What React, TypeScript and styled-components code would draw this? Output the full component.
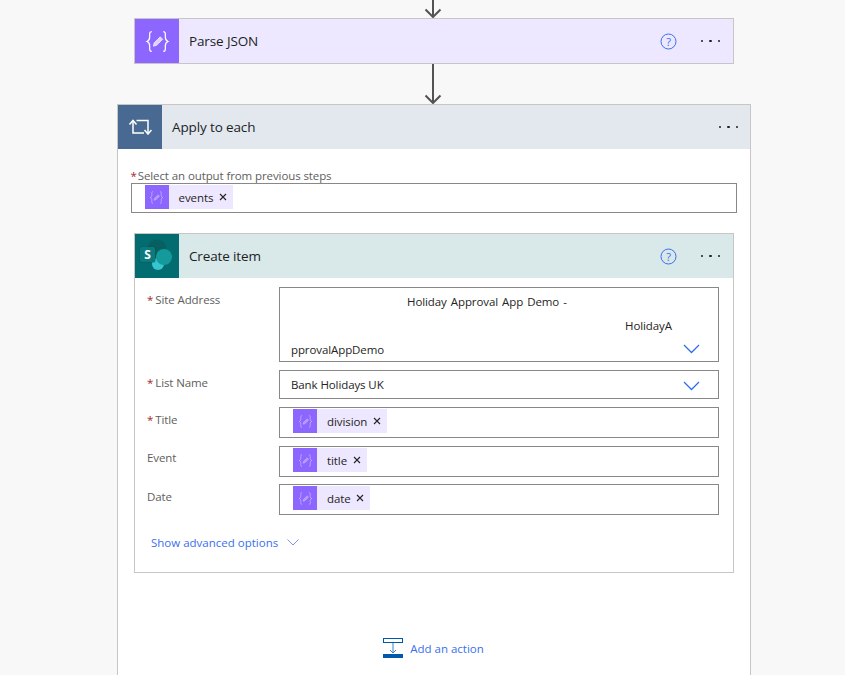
import React from "react";
import styled, { createGlobalStyle } from "styled-components";

const Global = createGlobalStyle`
  html, body { margin: 0; padding: 0; background: #f8f8f8; }
  * { box-sizing: border-box; }
`;

const Page = styled.div`
  width: 845px;
  height: 675px;
  overflow: hidden;
  background: #f8f8f8;
  padding-left: 117px;
  font-family: "Open Sans", "Noto Sans", sans-serif;
  font-size: 12px;
  color: #252423;
`;

const Flow = styled.div`
  width: 634px;
  display: flex;
  flex-direction: column;
  align-items: center;
`;

const ArrowSvg = styled.svg<{ $h: number }>`
  display: block;
  width: 22px;
  height: ${(p) => p.$h}px;
  margin-right: 2px;
`;

const Card = styled.section`
  width: 600px;
  border: 1px solid #c8c6c4;
  background: #fff;
`;

const Header = styled.header<{ $bg: string }>`
  height: 44px;
  display: flex;
  align-items: center;
  background: ${(p) => p.$bg};
`;

const IconBox = styled.div<{ $bg: string }>`
  width: 44px;
  height: 44px;
  flex: none;
  display: flex;
  align-items: center;
  justify-content: center;
  background: ${(p) => p.$bg};
`;

const Title = styled.div`
  flex: 1;
  margin-left: 10px;
  font-size: 13.5px;
  line-height: 18px;
  letter-spacing: -0.13px;
  color: #201f1e;
`;

const Help = styled.svg`
  width: 17px;
  height: 17px;
  margin-right: 24px;
`;

const More = styled.div<{ $right: number }>`
  display: flex;
  gap: 6px;
  margin-right: ${(p) => p.$right}px;
`;

const Dot = styled.span`
  width: 2.4px;
  height: 2.4px;
  border-radius: 50%;
  background: #201f1e;
`;

const Loop = styled.section`
  width: 634px;
  height: 590px;
  border: 1px solid #c8c6c4;
  background: #fff;
  display: flex;
  flex-direction: column;
`;

const LoopBody = styled.div`
  display: flex;
  flex-direction: column;
  align-items: center;
  padding: 20px 0 0;
`;

const TopField = styled.div`
  width: 606px;
  margin-left: -1px;
  margin-bottom: 20px;
`;

const TopLabel = styled.div`
  height: 14px;
  font-size: 11.5px;
  line-height: 14px;
  letter-spacing: -0.1px;
  color: #605e5c;
`;

const Star = styled.span`
  color: #a4262c;
  margin-right: 2px;
`;

const TopStar = styled(Star)`
  margin-right: 1px;
`;

const Input = styled.div<{ $h: number }>`
  height: ${(p) => p.$h}px;
  flex: 1;
  border: 1px solid #8a8886;
  background: #fff;
  display: flex;
  align-items: flex-start;
`;

const Chip = styled.span<{ $left: number }>`
  height: 24px;
  margin: 1px 0 0 ${(p) => p.$left}px;
  display: inline-flex;
  align-items: center;
  background: #ede8ff;
  padding-right: 6px;
`;

const ChipIcon = styled.span`
  width: 24px;
  height: 24px;
  display: flex;
  align-items: center;
  justify-content: center;
  background: #8c66ff;
`;

const ChipText = styled.span`
  margin-left: 10px;
  font-size: 11.5px;
  letter-spacing: -0.08px;
  color: #252423;
`;

const Close = styled.svg`
  width: 8px;
  height: 8px;
  margin-left: 5.5px;
`;

const Form = styled.div`
  display: flex;
  flex-direction: column;
  padding: 9px 14px 0 12px;
  height: 294px;
`;

const Row = styled.div<{ $mb: number }>`
  display: flex;
  margin-bottom: ${(p) => p.$mb}px;
`;

const Label = styled.div`
  width: 132px;
  padding-top: 5px;
  font-size: 11.5px;
  line-height: 16px;
  letter-spacing: -0.1px;
  color: #605e5c;
`;

const EventLabel = styled(Label)`
  padding-top: 4px;
`;

const SiteInput = styled.div`
  position: relative;
  flex: 1;
  height: 75px;
  border: 1px solid #8a8886;
  padding-top: 2px;
`;

const SiteLine = styled.div<{ $left: number }>`
  height: 24px;
  line-height: 24px;
  padding-left: ${(p) => p.$left}px;
  font-size: 11.5px;
  letter-spacing: -0.1px;
  word-spacing: 1.2px;
  color: #252423;
`;

const Chevron = styled.svg`
  position: absolute;
  right: 18px;
  bottom: 7px;
  width: 17px;
  height: 10px;
`;

const ListInput = styled.div`
  position: relative;
  flex: 1;
  height: 29px;
  border: 1px solid #8a8886;
  padding-left: 11px;
  line-height: 27px;
  font-size: 11.5px;
  letter-spacing: -0.1px;
  color: #252423;
`;

const Advanced = styled.div`
  display: flex;
  align-items: center;
  margin: 20px 0 0 4px;
  color: #3a6ff0;
  font-size: 11.5px;
  letter-spacing: 0;
`;

const SmallChevron = styled.svg`
  width: 12px;
  height: 7px;
  margin-left: 9px;
`;

const AddAction = styled.div`
  display: flex;
  align-items: center;
  gap: 7px;
  margin: 65px 0 0 -1px;
  color: #3a6ff0;
  font-size: 11.5px;
  letter-spacing: 0;
`;

const Arrow = ({ h }: { h: number }) => (
  <ArrowSvg $h={h} viewBox={`0 0 22 ${h}`}>
    <path d={`M11 0V${h - 1}M3.500 ${h - 8.500}L11 ${h - 1}L18.500 ${h - 8.500}`} fill="none" stroke="#555351" strokeWidth="2" />
  </ArrowSvg>
);

const JsonIcon = ({ size, opacity = 1 }: { size: number; opacity?: number }) => (
  <svg width={size} height={size} viewBox="0 0 24 24" fill="none" stroke="#fff" strokeOpacity={opacity}>
    <path d="M6.500 2.500C4 2.500 4.500 5 4.500 7.500C4.500 10 4 11.300 2 12C4 12.700 4.500 14 4.500 16.500C4.500 19 4 21.500 6.500 21.500" strokeWidth="1.200" />
    <path d="M17.500 2.500C20 2.500 19.500 5 19.500 7.500C19.500 10 20 11.300 22 12C20 12.700 19.500 14 19.500 16.500C19.500 19 20 21.500 17.500 21.500" strokeWidth="1.200" />
    <path d="M8 16.500L8.800 13.300L14.600 7.500L17 9.900L11.200 15.700Z" fill="#fff" fillOpacity={opacity * 0.7} strokeWidth="0.600" />
  </svg>
);

const LoopIcon = () => (
  <svg width="24" height="16" viewBox="0 0 24 16" fill="none" stroke="#fff" strokeWidth="1.500">
    <path d="M8.500 1.500H20V14.500M20 14.500" />
    <path d="M5 1.500V14H16" />
    <path d="M1.500 5.500L5 1.500L8.500 5.500" />
    <path d="M16.500 11L20 15L23.500 11" />
  </svg>
);

const SharePointIcon = () => (
  <svg width="36" height="36" viewBox="0 0 36 36">
    <circle cx="18" cy="11" r="9.500" fill="#075f62" />
    <circle cx="19" cy="26" r="6" fill="#37c6d0" />
    <circle cx="25" cy="19" r="8" fill="#159a9c" />
    <rect x="0.500" y="8.500" width="16" height="16" rx="1.500" fill="#05484b" opacity="0.5" />
    <rect x="1" y="9" width="15" height="15" rx="1.500" fill="#0b7a7c" />
    <text x="8.500" y="21" textAnchor="middle" fontFamily="Open Sans, sans-serif" fontWeight="700" fontSize="12" fill="#fff">S</text>
  </svg>
);

const HelpIcon = () => (
  <Help viewBox="0 0 17 17" fill="none">
    <circle cx="8.500" cy="8.500" r="7.500" stroke="#3a6ff0" />
    <text x="8.500" y="12.500" textAnchor="middle" fontFamily="Open Sans, sans-serif" fontSize="11" fill="#3a6ff0">?</text>
  </Help>
);

const Dots = ({ right }: { right: number }) => (
  <More $right={right}><Dot /><Dot /><Dot /></More>
);

const Token = ({ left, text }: { left: number; text: string }) => (
  <Chip $left={left}>
    <ChipIcon><JsonIcon size={15} opacity={0.5} /></ChipIcon>
    <ChipText>{text}</ChipText>
    <Close viewBox="0 0 8 8"><path d="M1 1L7 7M7 1L1 7" stroke="#252423" strokeWidth="1.100" /></Close>
  </Chip>
);

const ChevronIcon = () => (
  <Chevron viewBox="0 0 17 10" fill="none"><path d="M1 1L8.500 8.500L16 1" stroke="#2f6fed" strokeWidth="1.300" /></Chevron>
);

export default function App() {
  return (
    <Page>
      <Global />
      <Flow>
        <Arrow h={18} />
        <Card>
          <Header $bg="#ede8ff">
            <IconBox $bg="#8c66ff"><JsonIcon size={25} /></IconBox>
            <Title>Parse JSON</Title>
            <HelpIcon />
            <Dots right={13} />
          </Header>
        </Card>
        <Arrow h={40} />
        <Loop>
          <Header $bg="#e3e7ee">
            <IconBox $bg="#486991"><LoopIcon /></IconBox>
            <Title>Apply to each</Title>
            <Dots right={12} />
          </Header>
          <LoopBody>
            <TopField>
              <TopLabel><TopStar>*</TopStar>Select an output from previous steps</TopLabel>
              <Input $h={30}><Token left={13} text="events" /></Input>
            </TopField>
            <Card>
              <Header $bg="#d9e8e8">
                <IconBox $bg="#036c70"><SharePointIcon /></IconBox>
                <Title>Create item</Title>
                <HelpIcon />
                <Dots right={13} />
              </Header>
              <Form>
                <Row $mb={8}>
                  <Label><Star>*</Star>Site Address</Label>
                  <SiteInput>
                    <SiteLine $left={127}>Holiday Approval App Demo -</SiteLine>
                    <SiteLine $left={345}>HolidayA</SiteLine>
                    <SiteLine $left={11}>pprovalAppDemo</SiteLine>
                    <ChevronIcon />
                  </SiteInput>
                </Row>
                <Row $mb={8}>
                  <Label><Star>*</Star>List Name</Label>
                  <ListInput>Bank Holidays UK<ChevronIcon /></ListInput>
                </Row>
                <Row $mb={8}>
                  <Label><Star>*</Star>Title</Label>
                  <Input $h={31}><Token left={13} text="division" /></Input>
                </Row>
                <Row $mb={7}>
                  <EventLabel>Event</EventLabel>
                  <Input $h={31}><Token left={13} text="title" /></Input>
                </Row>
                <Row $mb={0}>
                  <Label>Date</Label>
                  <Input $h={31}><Token left={13} text="date" /></Input>
                </Row>
                <Advanced>
                  Show advanced options
                  <SmallChevron viewBox="0 0 12 7" fill="none"><path d="M0.500 0.500L6 6L11.500 0.500" stroke="#7f8ff5" /></SmallChevron>
                </Advanced>
              </Form>
            </Card>
            <AddAction>
              <svg width="20" height="20" viewBox="0 0 20 20" fill="none">
                <rect x="0.500" y="0.500" width="19" height="4" stroke="#0058ad" />
                <path d="M10 5V15M7 12L10 15L13 12" stroke="#3a7fd0" />
                <rect x="0" y="16" width="20" height="4" fill="#0058ad" />
              </svg>
              Add an action
            </AddAction>
          </LoopBody>
        </Loop>
      </Flow>
    </Page>
  );
}
